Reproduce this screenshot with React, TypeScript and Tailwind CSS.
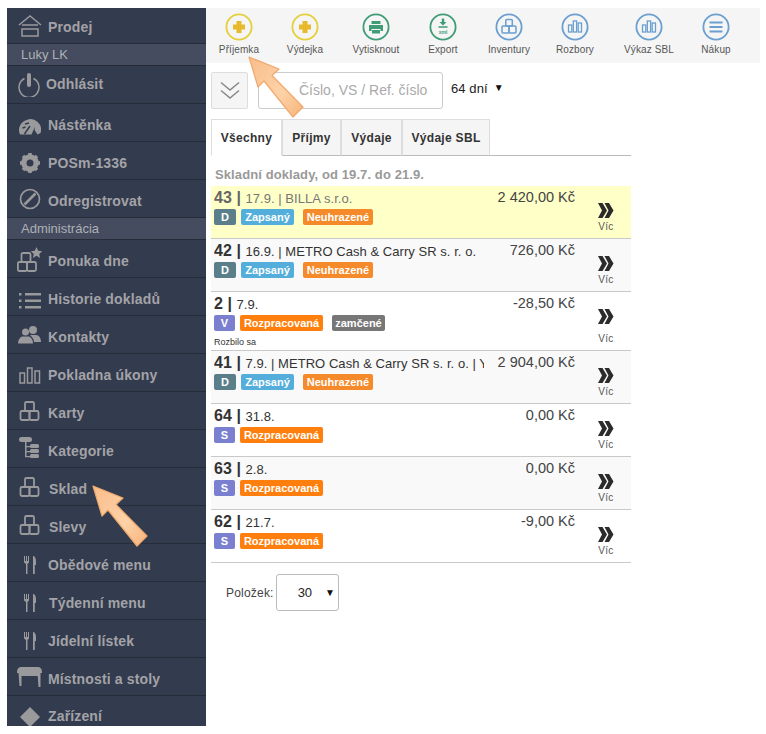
import type { ReactNode } from "react";

const G = "#9a9a9c";

function Box({ x = 0, y = 0 }: { x?: number; y?: number }) {
  return <rect x={x} y={y} width="9" height="9" rx="1.5" fill="none" stroke="currentColor" strokeWidth="1.8" />;
}

function Blocks() {
  return (
    <svg width="22" height="22" viewBox="0 0 22 22" className="text-[#9a9a9c]">
      <Box x={6} y={2} />
      <Box x={1.5} y={11} />
      <Box x={10.5} y={11} />
    </svg>
  );
}

function Fork() {
  return (
    <svg width="14" height="20" viewBox="0 0 14 20" fill={G}>
      <path d="M1 1h1v5h1V1h1v5h1V1h1v6.5L4.5 9v10h-1.5V9L1 7.5z" />
      <path d="M10 1c2 0 3 2.500 3 6v3h-1.200v9H10z" />
    </svg>
  );
}

function Bars({ color = G, size = 22 }: { color?: string; size?: number }) {
  return (
    <svg width={size} height={size} viewBox="0 0 22 22" fill="none" stroke={color} strokeWidth="1.500">
      <rect x="1" y="9" width="4.500" height="10" />
      <rect x="8.500" y="4" width="4.500" height="15" />
      <rect x="16" y="7" width="4.500" height="12" />
    </svg>
  );
}

const icons: Record<string, ReactNode> = {
  home: (
    <svg width="24" height="22" viewBox="0 0 24 22" fill="none" stroke={G} strokeWidth="1.500">
      <path d="M1 10 12 1l11 9" />
      <path d="M4 10h16M4 14h16v7H4z" />
    </svg>
  ),
  power: (
    <svg width="24" height="24" viewBox="0 0 24 24" fill="none" stroke={G}>
      <path d="M7.500 5.500a10 10 0 1 0 9 0" strokeWidth="1.500" />
      <path d="M12 2v10" strokeWidth="4" strokeLinecap="round" />
    </svg>
  ),
  gauge: (
    <svg width="22" height="16" viewBox="0 0 22 16" fill={G}>
      <path d="M7.500 1A10.500 10.500 0 0 1 21.500 14l-3 1.500-3-4.500 .5-3.500-3.500 8H1A10.500 10.500 0 0 1 7.500 1z" />
      <path d="M6 5l4-1M3.500 9l3-1M5.500 15 11 7" stroke="#333b4e" strokeWidth="1.500" fill="none" />
    </svg>
  ),
  gear: (
    <svg width="22" height="22" viewBox="0 0 22 22">
      <circle cx="11" cy="11" r="6.500" fill="none" stroke={G} strokeWidth="4.500" />
      <path d="M11 1v20M1 11h20M4 4l14 14M18 4 4 18" stroke={G} strokeWidth="3.500" />
      <circle cx="11" cy="11" r="3.500" fill="#333b4e" />
    </svg>
  ),
  ban: (
    <svg width="22" height="22" viewBox="0 0 22 22" fill="none" stroke={G} strokeWidth="1.700">
      <circle cx="11" cy="11" r="9.500" />
      <path d="M5.500 16.500l11-11" strokeWidth="2.500" />
    </svg>
  ),
  star: (
    <svg width="26" height="26" viewBox="0 0 26 26" className="text-[#9a9a9c]">
      <Box x={4.500} y={6} />
      <Box x={0.900} y={15} />
      <Box x={10} y={15} />
      <path d="m19.500 0 1.700 3.800 4 .4-3 2.700.9 4-3.600-2.100-3.600 2.100.9-4-3-2.700 4-.4z" fill={G} />
    </svg>
  ),
  list: (
    <svg width="22" height="16" viewBox="0 0 22 16" fill={G}>
      <rect x="0" y="0" width="2.500" height="2.500" />
      <rect x="0" y="6.500" width="2.500" height="2.500" />
      <rect x="0" y="13" width="2.500" height="2.500" />
      <rect x="6" y="0" width="16" height="2.500" />
      <rect x="6" y="6.500" width="16" height="2.500" />
      <rect x="6" y="13" width="16" height="2.500" />
    </svg>
  ),
  users: (
    <svg width="23" height="18" viewBox="0 0 23 18" fill={G}>
      <circle cx="15" cy="4" r="4" />
      <path d="M12 9h6c3 0 5 3 5 7h-7c0-3-2-5-4-7z" />
      <circle cx="7.500" cy="6" r="3.500" />
      <path d="M4 10.500h7c2.500 1 4 4 4 7H0c0-3 1.500-6 4-7z" />
    </svg>
  ),
  bars: <Bars />,
  blocks: <Blocks />,
  tree: (
    <svg width="21" height="22" viewBox="0 0 21 22" fill={G}>
      <rect x="0" y="0" width="13" height="5" rx="2.500" />
      <path d="M6 5h1.500v15H6z" />
      <path d="M6 9h6v1.200H6zM6 14h6v1.200H6zM6 19h6v1.200H6z" />
      <rect x="11" y="7" width="9" height="4" rx="1.500" />
      <rect x="11" y="12" width="9" height="4" rx="1.500" />
      <rect x="11" y="17" width="9" height="4" rx="1.500" />
    </svg>
  ),
  fork: <Fork />,
  table: (
    <svg width="25" height="20" viewBox="0 0 25 20" fill={G}>
      <path d="M4 0h17c2 0 4 2 4 4.500V6H0V4.500C0 2 2 0 4 0z" />
      <path d="M1.500 6h3v13h-2zM20.500 6h3v14h-2zM4 6h17v3H4z" />
    </svg>
  ),
  diamond: (
    <svg width="20" height="20" viewBox="0 0 20 20" fill={G}>
      <path d="M10 0 20 10 10 20 0 10z" />
    </svg>
  ),
};

type NavItem = { label: string; icon?: string; head?: boolean; box?: string; iconPad?: string; textPad?: string };

const nav: NavItem[] = [
  { label: "Prodej", icon: "home", textPad: "pt-[4px]" },
  { label: "Luky LK", head: true },
  { label: "Odhlásit", icon: "power", box: "w-[39px]", textPad: "pt-0" },
  { label: "Nástěnka", icon: "gauge", iconPad: "pt-[8px]" },
  { label: "POSm-1336", icon: "gear", iconPad: "pt-[4px]" },
  { label: "Odregistrovat", icon: "ban" },
  { label: "Administrácia", head: true },
  { label: "Ponuka dne", icon: "star", iconPad: "pt-[2px]" },
  { label: "Historie dokladů", icon: "list", iconPad: "pt-[8px]" },
  { label: "Kontakty", icon: "users" },
  { label: "Pokladna úkony", icon: "bars", iconPad: "pt-[4px]" },
  { label: "Karty", icon: "blocks" },
  { label: "Kategorie", icon: "tree", iconPad: "pb-[2px]" },
  { label: "Sklad", icon: "blocks", box: "w-[42px]" },
  { label: "Slevy", icon: "blocks", box: "w-[42px]" },
  { label: "Obědové menu", icon: "fork", iconPad: "pt-[5px]" },
  { label: "Týdenní menu", icon: "fork", iconPad: "pt-[5px]", box: "w-[42px]" },
  { label: "Jídelní lístek", icon: "fork", iconPad: "pt-[5px]" },
  { label: "Místnosti a stoly", icon: "table" },
  { label: "Zařízení", icon: "diamond", iconPad: "pt-[4px]", textPad: "pt-[4px]" },
];

function Sidebar() {
  return (
    <aside className="flex h-[718px] w-[199px] shrink-0 flex-col overflow-hidden bg-[#333b4e]">
      {nav.map((item, i) =>
        item.head ? (
          <div
            key={item.label}
            className="flex h-[22px] shrink-0 items-center border-b border-[#262c3a] bg-[#454c5f] pl-[14px] text-[13px] text-[#aeb0b6]"
          >
            {item.label}
          </div>
        ) : (
          <div
            key={item.label}
            className={`flex shrink-0 items-center border-b border-[#262c3a] ${i === 0 ? "h-[36px]" : "h-[38px]"}`}
          >
            <div className={`flex shrink-0 items-center justify-center pl-[4px] ${item.box ?? "w-[41px]"} ${item.iconPad ?? ""}`}>
              {icons[item.icon ?? ""]}
            </div>
            <span className={`text-[14px] font-bold tracking-[0.15px] text-[#a3a3a7] ${item.textPad ?? "pt-[6px]"}`}>
              {item.label}
            </span>
          </div>
        ),
      )}
    </aside>
  );
}

function Round({ color, children }: { color: string; children: ReactNode }) {
  return (
    <svg width="28" height="28" viewBox="0 0 28 28" fill="none">
      <circle cx="14" cy="14" r="12.600" stroke={color} strokeWidth="1.800" />
      {children}
    </svg>
  );
}

const Y = "#e5cf3a";
const GR = "#3f9c76";
const B = "#6a9fd0";

const plus = <path d="M11.500 8h5v3.500H20v5h-3.500V20h-5v-3.500H8v-5h3.500z" fill="#e7b92b" />;

const tools: { label: string; w: string; icon: ReactNode }[] = [
  { label: "Příjemka", w: "w-[64px]", icon: <Round color={Y}>{plus}</Round> },
  { label: "Výdejka", w: "w-[68px]", icon: <Round color={Y}>{plus}</Round> },
  {
    label: "Vytisknout",
    w: "w-[74px]",
    icon: (
      <Round color={GR}>
        <path d="M9.500 8h9v3h-9zM7 12h14v6h-2.500v-2h-9v2H7z" fill={GR} />
        <path d="M10 17h8v3.500h-8z" fill={GR} />
      </Round>
    ),
  },
  {
    label: "Export",
    w: "w-[60px]",
    icon: (
      <Round color={GR}>
        <path d="M12.800 5.500h2.400v3.500h2.300L14 12.500 10.500 9h2.300z" fill={GR} />
        <path d="M9.500 14h9" stroke={GR} strokeWidth="1.500" />
        <text x="14" y="20.500" textAnchor="middle" fontSize="5" fontWeight="700" fill={GR} fontFamily="Liberation Sans">
          xml
        </text>
      </Round>
    ),
  },
  {
    label: "Inventury",
    w: "w-[72px]",
    icon: (
      <Round color={B}>
        <g stroke={B} strokeWidth="1.500">
          <rect x="10.800" y="6.500" width="6.500" height="6.500" rx="1" />
          <rect x="7" y="13" width="7" height="7" rx="1" />
          <rect x="14" y="13" width="7" height="7" rx="1" />
        </g>
      </Round>
    ),
  },
  {
    label: "Rozbory",
    w: "w-[60px]",
    icon: (
      <Round color={B}>
        <g stroke={B} strokeWidth="1.300">
          <rect x="7.500" y="12" width="3.300" height="7" />
          <rect x="12.300" y="8" width="3.300" height="11" />
          <rect x="17.200" y="10" width="3.300" height="9" />
        </g>
      </Round>
    ),
  },
  {
    label: "Výkaz SBL",
    w: "w-[88px]",
    icon: (
      <Round color={B}>
        <g stroke={B} strokeWidth="1.300">
          <rect x="7.500" y="12" width="3.300" height="7" />
          <rect x="12.300" y="8" width="3.300" height="11" />
          <rect x="17.200" y="10" width="3.300" height="9" />
        </g>
      </Round>
    ),
  },
  {
    label: "Nákup",
    w: "w-[46px]",
    icon: (
      <Round color={B}>
        <path d="M7.500 9.500h13M7.500 14h13M7.500 18.500h13" stroke={B} strokeWidth="1.800" />
      </Round>
    ),
  },
];

function Toolbar() {
  return (
    <div className="flex h-[55px] items-start bg-[#f5f5f5] pt-[5px] pl-[1px]">
      {tools.map((t) => (
        <div key={t.label} className={`flex shrink-0 flex-col items-center ${t.w}`}>
          {t.icon}
          <span className="mt-[2px] whitespace-nowrap text-[10px] leading-[14px] tracking-[0.1px] text-[#555]">{t.label}</span>
        </div>
      ))}
    </div>
  );
}

function Badge({ color, children, className = "" }: { color: string; children: ReactNode; className?: string }) {
  return (
    <span
      className={`flex h-[16px] items-center justify-center rounded-[2px] text-[11px] font-bold text-white ${color} ${className}`}
    >
      {children}
    </span>
  );
}

function Kind({ k }: { k: string }) {
  return (
    <Badge color={k === "D" ? "bg-[#5a7f8a]" : "bg-[#7b7fd0]"} className={k === "D" ? "w-[22px]" : "w-[21px]"}>
      {k}
    </Badge>
  );
}

type Row = {
  num: string;
  rest: string;
  price: string;
  kind: string;
  hl?: boolean;
  alt?: boolean;
  note?: string;
  booked?: boolean;
  muted?: boolean;
};

const rows: Row[] = [
  { num: "43", rest: "17.9. | BILLA s.r.o.", price: "2 420,00 Kč", kind: "D", hl: true, booked: true, muted: true },
  { num: "42", rest: "16.9. | METRO Cash & Carry SR s. r. o.", price: "726,00 Kč", kind: "D", alt: true, booked: true },
  { num: "2", rest: "7.9.", price: "-28,50 Kč", kind: "V", note: "Rozbilo sa" },
  { num: "41", rest: "7.9. | METRO Cash & Carry SR s. r. o. | Y", price: "2 904,00 Kč", kind: "D", alt: true, booked: true },
  { num: "64", rest: "31.8.", price: "0,00 Kč", kind: "S" },
  { num: "63", rest: "2.8.", price: "0,00 Kč", kind: "S", alt: true },
  { num: "62", rest: "21.7.", price: "-9,00 Kč", kind: "S" },
];

function DocRow({ row }: { row: Row }) {
  const bg = row.hl ? "bg-[#ffffc8]" : row.alt ? "bg-[#f9f9f9]" : "bg-white";
  return (
    <div className={`flex items-start border-b border-[#c9c9c9] ${bg} ${row.note ? "h-[59px]" : "h-[53px]"}`}>
      <div className="ml-[3px] w-[270px] shrink-0 pt-[1px]">
        <div className={`h-[22px] overflow-hidden whitespace-nowrap text-[13px] leading-[22px] tracking-[0.05px] ${row.muted ? "text-[#777]" : "text-[#333]"}`}>
          <span className={`text-[16px] font-bold ${row.muted ? "text-[#666]" : "text-[#333]"}`}>{row.num} | </span>
          <span>{row.rest}</span>
        </div>
        <div className="flex gap-[5px]">
          <Kind k={row.kind} />
          {row.booked ? (
            <>
              <Badge color="bg-[#53aedb]" className="w-[53px]">Zapsaný</Badge>
              <Badge color="bg-[#f58a2a]" className="ml-[4px] w-[70px]">Neuhrazené</Badge>
            </>
          ) : (
            <Badge color="bg-[#ff7f0e]" className="w-[83px]">Rozpracovaná</Badge>
          )}
          {row.note && <Badge color="bg-[#777]" className="ml-[4px] w-[53px]">zamčené</Badge>}
        </div>
        {row.note && <div className="mt-[5px] text-[9px] leading-[12px] text-[#333]">{row.note}</div>}
      </div>
      <div className="w-[91px] shrink-0 whitespace-nowrap pt-[1px] text-right text-[14.5px] leading-[20px] text-[#444]">
        {row.price}
      </div>
      <div className="flex w-[62px] shrink-0 flex-col items-center pt-[17px]">
        <svg width="16" height="15" viewBox="0 0 16 15" fill="#2b2b2b">
          <path d="M0 0h4.500L9 7.500 4.500 15H0l4-7.500zM6.500 0H11l4.500 7.500L11 15H6.500l4-7.500z" />
        </svg>
        <span className={`text-[10px] leading-[12px] tracking-[0.3px] text-[#555] ${row.note ? "mt-[9px]" : "mt-[3px]"}`}>Víc</span>
      </div>
    </div>
  );
}

const tabs = [
  { label: "Všechny", w: "w-[71px]", active: true },
  { label: "Příjmy", w: "w-[59px]" },
  { label: "Výdaje", w: "w-[61px]" },
  { label: "Výdaje SBL", w: "w-[88px]" },
];

function Arrow({ className }: { className: string }) {
  return (
    <svg width="62" height="66" viewBox="0 0 62 66" className={`absolute ${className}`}>
      <defs>
        <linearGradient id="peach" x1="0" y1="0" x2="1" y2="1">
          <stop offset="0" stopColor="#f9bd8a" />
          <stop offset="0.6" stopColor="#fdd2a8" />
          <stop offset="1" stopColor="#f7b47a" />
        </linearGradient>
      </defs>
      <path
        d="M2 1 32 13 25 19.500 56 51 46 61 17 25 11 31z"
        fill="url(#peach)"
        stroke="#efa96e"
        strokeWidth="1.200"
        strokeLinejoin="round"
      />
    </svg>
  );
}

export default function App() {
  return (
    <div className="relative h-[734px] w-[766px] overflow-hidden bg-white pt-[8px] pl-[7px] font-['Liberation_Sans',Arial,sans-serif]">
      <div className="flex w-[753px]">
        <Sidebar />
        <main className="w-[554px]">
          <Toolbar />
          <div className="pl-[5px]">
            <div className="mt-[9px] flex items-start">
              <div className="flex h-[37px] w-[37px] items-center justify-center rounded-[2px] border border-[#ddd] bg-[#f5f5f5]">
                <svg width="20" height="19" viewBox="0 0 20 19" fill="none" stroke="#888" strokeWidth="1.500">
                  <path d="M1 1.500 10 9l9-7.500M1 9.500 10 17l9-7.500" />
                </svg>
              </div>
              <div className="ml-[10px] flex h-[37px] w-[185px] items-center rounded-[3px] border border-[#ccc] pl-[40px] text-[14px] text-[#aaa]">
                Číslo, VS / Ref. číslo
              </div>
              <span className="ml-[8px] mt-[7px] text-[13px] leading-[20px] tracking-[0.1px] text-[#222]">64 dní</span>
              <span className="ml-[6px] mt-[7px] text-[10px] leading-[18px] text-[#111]">▼</span>
            </div>
            <div className="mt-[10px] flex h-[37px] w-[420px] border-b border-[#bbb]">
              {tabs.map((t) => (
                <div
                  key={t.label}
                  className={`flex h-[37px] shrink-0 items-center justify-center border border-[#ddd] text-[12px] font-bold tracking-[0.3px] text-[#333] ${t.w} ${
                    t.active ? "border-b-white bg-white" : "border-b-[#bbb] bg-[#f5f5f5]"
                  }`}
                >
                  {t.label}
                </div>
              ))}
            </div>
            <h2 className="mt-[9px] ml-[4px] h-[21px] text-[13px] font-bold leading-[20px] tracking-[0.1px] text-[#999]">
              Skladní doklady, od 19.7. do 21.9.
            </h2>
            <div className="w-[420px]">
              {rows.map((r) => (
                <DocRow key={r.num} row={r} />
              ))}
            </div>
            <div className="mt-[11px] flex items-center pl-[15px]">
              <span className="text-[12px] tracking-[0.2px] text-[#444]">Položek:</span>
              <div className="ml-[2px] flex h-[37px] w-[63px] items-center rounded-[3px] border border-[#bbb] pl-[21px] text-[13px] text-[#222]">
                30
                <span className="ml-[13px] text-[10px] text-[#111]">▼</span>
              </div>
            </div>
          </div>
        </main>
      </div>
      <Arrow className="left-[247px] top-[56px]" />
      <Arrow className="left-[91px] top-[485px]" />
    </div>
  );
}
